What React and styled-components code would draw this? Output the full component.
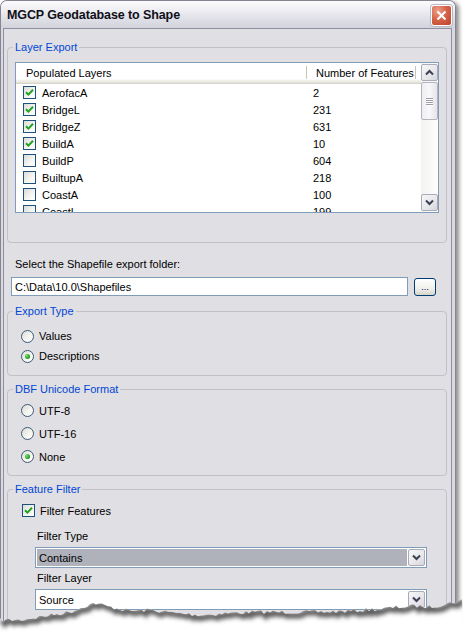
import React from "react";
import styled, { createGlobalStyle } from "styled-components";

const GlobalStyle = createGlobalStyle`
  html, body { margin: 0; padding: 0; background: #ffffff; }
  body { font-family: "Liberation Sans", Arial, sans-serif; font-size: 11px; color: #000; }
  * { box-sizing: border-box; }
`;

const Page = styled.div`
  position: relative;
  width: 463px;
  height: 632px;
  overflow: hidden;
  background: #ffffff;
`;

const Window = styled.div`
  width: 456px;
  height: 660px;
  border: 1px solid #85858f;
  border-bottom: none;
  border-radius: 7px 7px 0 0;
  background: #d9d9e1;
  box-shadow: 3px 2px 4px rgba(0, 0, 0, 0.45);
  display: flex;
  flex-direction: column;
`;

const TitleBar = styled.div`
  height: 27px;
  flex: none;
  display: flex;
  align-items: center;
  justify-content: space-between;
  padding: 0 3px 0 6px;
  border-radius: 6px 6px 0 0;
  background: linear-gradient(#fbfbfd 0%, #f0f0f4 30%, #dedee6 70%, #d2d2dc 100%);
`;

const Title = styled.span`
  font-weight: bold;
  font-size: 12.5px;
  color: #101018;
  letter-spacing: -0.1px;
`;

const CloseButton = styled.div`
  width: 21px;
  height: 21px;
  border: 1px solid #ffffff;
  border-radius: 3px;
  background: radial-gradient(circle at 30% 25%, #eda08a 0%, #d5644a 45%, #c0412b 100%);
  box-shadow: 0 0 0 1px #b9b9c4;
  display: flex;
  align-items: center;
  justify-content: center;
  margin-top: 1px;
`;

const Client = styled.div`
  flex: 1;
  margin: 0 3px 0 2px;
  border: 1px solid #8e8e9e;
  border-bottom: none;
  background: #e0dfe3;
  padding: 12px 4px 0 3px;
  display: flex;
  flex-direction: column;
`;

const Group = styled.fieldset`
  margin: ${(p) => p.$mt || 0}px 0 0 0;
  padding: ${(p) => p.$pt || 0}px 7px ${(p) => p.$pb || 0}px 7px;
  border: 1px solid #c2c1c8;
  border-radius: 4px;
  min-width: 0;
`;

const Legend = styled.legend`
  color: #0046d5;
  padding: 0 2px;
  margin-left: -2px;
  line-height: 13px;
  font-size: 11px;
`;

const ListBox = styled.div`
  width: 424px;
  height: 151px;
  border: 1px solid #7f9db9;
  background: #ffffff;
  display: flex;
  overflow: hidden;
`;

const ListMain = styled.div`
  flex: 1;
  display: flex;
  flex-direction: column;
  overflow: hidden;
`;

const Header = styled.div`
  height: 21px;
  flex: none;
  display: flex;
  align-items: center;
  background: linear-gradient(#ffffff 0%, #ffffff 80%, #f0efe9 88%, #e2e1da 100%);
  border-bottom: 1px solid #d6d3c8;
`;

const HeaderCell = styled.div`
  width: ${(p) => p.$w}px;
  padding-left: ${(p) => p.$pl}px;
  height: 100%;
  display: flex;
  align-items: center;
  position: relative;
  white-space: nowrap;
  &::after {
    content: "";
    position: absolute;
    right: 0;
    top: 3px;
    bottom: 4px;
    width: 1px;
    background: #c7c5b2;
    box-shadow: 1px 0 0 #ffffff;
  }
`;

const Row = styled.div`
  height: 17px;
  flex: none;
  display: flex;
  align-items: center;
`;

const NameCell = styled.div`
  width: 290px;
  display: flex;
  align-items: center;
  gap: 6px;
  padding-left: 7px;
`;

const NumCell = styled.div`
  padding-left: 7px;
`;

const Box = styled.span`
  width: 13px;
  height: 13px;
  flex: none;
  border: 1px solid #1c5180;
  background: linear-gradient(135deg, #dcdcd5 0%, #f4f4f0 55%, #ffffff 100%);
  display: inline-flex;
  align-items: center;
  justify-content: center;
`;

const Radio = styled.span`
  width: 13px;
  height: 13px;
  flex: none;
  border-radius: 50%;
  border: 1px solid #3d5a78;
  background: linear-gradient(135deg, #dcdcd5 0%, #f4f4f0 55%, #ffffff 100%);
  display: inline-flex;
  align-items: center;
  justify-content: center;
  &::after {
    content: "";
    display: ${(p) => (p.$on ? "block" : "none")};
    width: 5px;
    height: 5px;
    border-radius: 50%;
    background: radial-gradient(circle at 35% 35%, #7ee07a, #21a121 60%, #1a8a1a);
  }
`;

const ScrollBar = styled.div`
  width: 17px;
  flex: none;
  display: flex;
  flex-direction: column;
  padding: 1px 0;
  background: linear-gradient(90deg, #f3f3f1, #fdfdfb);
`;

const ScrollBtn = styled.div`
  height: 17px;
  flex: none;
  border: 1px solid #a9acb8;
  border-radius: 2px;
  background: linear-gradient(135deg, #f7f7f9 0%, #e6e6eb 60%, #d5d5dc 100%);
  display: flex;
  align-items: center;
  justify-content: center;
`;

const Thumb = styled.div`
  height: 38px;
  margin-top: 1px;
  border: 1px solid #b2b4c0;
  border-radius: 2px;
  background: linear-gradient(90deg, #eeeef2 0%, #f8f8fa 50%, #e4e4ea 100%);
  display: flex;
  flex-direction: column;
  align-items: center;
  justify-content: center;
  gap: 1px;
`;

const Grip = styled.span`
  width: 7px;
  height: 1px;
  background: #9a9caa;
  box-shadow: 0 1px 0 #ffffff;
`;

const Track = styled.div`
  flex: 1;
`;

const Label = styled.div`
  line-height: 13px;
  margin: ${(p) => p.$mt || 0}px 0 0 ${(p) => p.$ml || 0}px;
`;

const PathRow = styled.div`
  display: flex;
  align-items: center;
  gap: 6px;
  margin: 6px 0 0 4px;
`;

const TextInput = styled.div`
  width: 397px;
  height: 19px;
  border: 1px solid #7f9db9;
  background: #ffffff;
  display: flex;
  align-items: center;
  padding-left: 3px;
`;

const DotsButton = styled.div`
  width: 22px;
  height: 18px;
  border: 1px solid #003c74;
  border-radius: 3px;
  background: linear-gradient(#ffffff 0%, #f0f0ea 60%, #d8d5c8 100%);
  display: flex;
  align-items: flex-end;
  justify-content: center;
  padding-bottom: 3px;
  font-size: 9px;
  line-height: 9px;
  color: #000060;
`;

const OptionList = styled.div`
  display: flex;
  flex-direction: column;
  margin-left: ${(p) => p.$ml ?? 6}px;
`;

const Option = styled.div`
  height: ${(p) => p.$h}px;
  display: flex;
  align-items: center;
  gap: 5px;
`;

const SubSection = styled.div`
  margin-left: 20px;
  display: flex;
  flex-direction: column;
`;

const Combo = styled.div`
  width: 392px;
  height: 21px;
  border: 1px solid #7f9db9;
  background: #ffffff;
  display: flex;
  align-items: center;
  padding: 1px;
  margin-top: 4px;
`;

const ComboText = styled.div`
  flex: 1;
  height: 100%;
  display: flex;
  align-items: center;
  padding-left: 2px;
  background: ${(p) => (p.$sel ? "#afb1bb" : "#ffffff")};
`;

const ComboBtn = styled.div`
  width: 17px;
  height: 17px;
  margin-left: 1px;
  border: 1px solid #a9acb8;
  border-radius: 2px;
  background: linear-gradient(135deg, #f7f7f9 0%, #e6e6eb 60%, #d5d5dc 100%);
  display: flex;
  align-items: center;
  justify-content: center;
`;

const TornEdge = styled.svg`
  position: absolute;
  left: 0;
  bottom: 0;
  width: 463px;
  height: 40px;
`;

const Check = () => (
  <svg width="9" height="9" viewBox="0 0 9 9">
    <path d="M1 4.2 L3.4 6.6 L8 1.8" stroke="#21a121" strokeWidth="2" fill="none" />
  </svg>
);

const Chevron = ({ up }) => (
  <svg width="9" height="7" viewBox="0 0 9 7">
    <path
      d={up ? "M1 5.5 L4.5 2 L8 5.5" : "M1 1.5 L4.5 5 L8 1.5"}
      stroke="#3b3f52"
      strokeWidth="2"
      fill="none"
    />
  </svg>
);

const layers = [
  ["AerofacA", "2", true],
  ["BridgeL", "231", true],
  ["BridgeZ", "631", true],
  ["BuildA", "10", true],
  ["BuildP", "604", false],
  ["BuiltupA", "218", false],
  ["CoastA", "100", false],
  ["CoastL", "199", false],
];

function buildEdge() {
  const keys = [
    [0, 620], [20, 620], [45, 616], [70, 612], [85, 606], [95, 603], [110, 607],
    [130, 611], [150, 610], [175, 613], [200, 615], [230, 613], [260, 612],
    [290, 612], [320, 612], [350, 611], [380, 609], [400, 607], [415, 606],
    [430, 607], [445, 604], [455, 602], [463, 600],
  ];
  let seed = 7;
  const rnd = () => {
    seed = (seed * 16807) % 2147483647;
    return seed / 2147483647;
  };
  const top = 632 - 40;
  const pts = [];
  for (let x = 0; x <= 463; x += 3) {
    let i = 0;
    while (i < keys.length - 2 && keys[i + 1][0] < x) i++;
    const [x0, y0] = keys[i];
    const [x1, y1] = keys[i + 1];
    const t = Math.min(1, Math.max(0, (x - x0) / (x1 - x0)));
    const y = y0 + (y1 - y0) * t + (rnd() - 0.5) * 4;
    pts.push([x, y - top]);
  }
  const line = pts.map(([x, y], i) => `${i ? "L" : "M"}${x},${y.toFixed(1)}`).join(" ");
  return { line, area: `${line} L463,40 L0,40 Z` };
}

const edge = buildEdge();

export default function App() {
  return (
    <Page>
      <GlobalStyle />
      <Window>
        <TitleBar>
          <Title>MGCP Geodatabase to Shape</Title>
          <CloseButton>
            <svg width="11" height="11" viewBox="0 0 11 11">
              <path d="M1.5 1.5 L9.5 9.5 M9.5 1.5 L1.5 9.5" stroke="#fff" strokeWidth="2.2" />
            </svg>
          </CloseButton>
        </TitleBar>
        <Client>
          <Group $pt={8} $pb={29}>
            <Legend>Layer Export</Legend>
            <ListBox>
              <ListMain>
                <Header>
                  <HeaderCell $w={291} $pl={10}>Populated Layers</HeaderCell>
                  <HeaderCell $w={109} $pl={9}>Number of Features</HeaderCell>
                </Header>
                {layers.map(([name, n, on]) => (
                  <Row key={name}>
                    <NameCell>
                      <Box>{on && <Check />}</Box>
                      {name}
                    </NameCell>
                    <NumCell>{n}</NumCell>
                  </Row>
                ))}
              </ListMain>
              <ScrollBar>
                <ScrollBtn><Chevron up /></ScrollBtn>
                <Thumb>
                  <Grip /><Grip /><Grip /><Grip />
                </Thumb>
                <Track />
                <ScrollBtn><Chevron /></ScrollBtn>
              </ScrollBar>
            </ListBox>
          </Group>

          <Label $mt={15} $ml={8}>Select the Shapefile export folder:</Label>
          <PathRow>
            <TextInput>C:\Data\10.0\Shapefiles</TextInput>
            <DotsButton>...</DotsButton>
          </PathRow>

          <Group $mt={9} $pt={8} $pb={9}>
            <Legend>Export Type</Legend>
            <OptionList>
              <Option $h={20}><Radio />Values</Option>
              <Option $h={20}><Radio $on />Descriptions</Option>
            </OptionList>
          </Group>

          <Group $mt={7} $pt={3} $pb={7}>
            <Legend>DBF Unicode Format</Legend>
            <OptionList>
              <Option $h={23}><Radio />UTF-8</Option>
              <Option $h={23}><Radio />UTF-16</Option>
              <Option $h={23}><Radio $on />None</Option>
            </OptionList>
          </Group>

          <Group $mt={7} $pt={6} $pb={40}>
            <Legend>Feature Filter</Legend>
            <OptionList $ml={7}>
              <Option $h={17}><Box><Check /></Box>Filter Features</Option>
            </OptionList>
            <SubSection>
              <Label $mt={11} $ml={2}>Filter Type</Label>
              <Combo>
                <ComboText $sel>Contains</ComboText>
                <ComboBtn><Chevron /></ComboBtn>
              </Combo>
              <Label $mt={4} $ml={2}>Filter Layer</Label>
              <Combo>
                <ComboText>Source</ComboText>
                <ComboBtn><Chevron /></ComboBtn>
              </Combo>
            </SubSection>
          </Group>
        </Client>
      </Window>
      <TornEdge viewBox="0 0 463 40">
        <defs>
          <clipPath id="below">
            <path d={edge.area} />
          </clipPath>
          <filter id="blur" x="-5%" y="-50%" width="110%" height="200%">
            <feGaussianBlur stdDeviation="2" />
          </filter>
        </defs>
        <path d={edge.area} fill="#ffffff" />
        <g clipPath="url(#below)">
          <path d={edge.line} transform="translate(2,2)" stroke="#5a5a5a" strokeWidth="6" fill="none" filter="url(#blur)" />
        </g>
      </TornEdge>
    </Page>
  );
}
